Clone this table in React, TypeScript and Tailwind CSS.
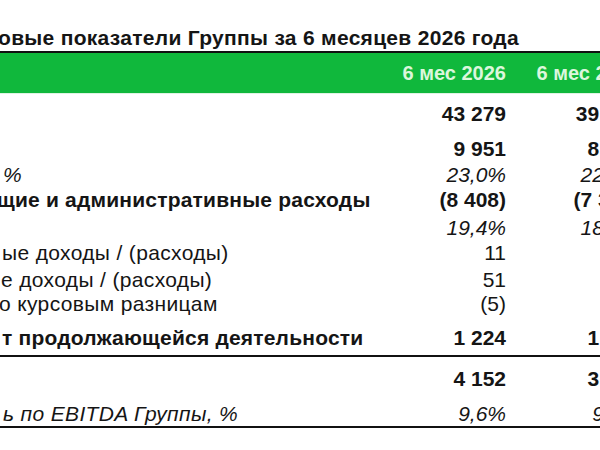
type Row = {
  label: string
  shift: number
  v1: string
  v2: string
  h: string
  style: "bold" | "italic" | "normal"
  tight?: boolean
}

const rows: Row[] = [
  { label: "", shift: 0, v1: "43 279", v2: "39 186", h: "h-[40px]", style: "bold" },
  { label: "", shift: 0, v1: "9 951", v2: "8 652", h: "h-[29px]", style: "bold" },
  { label: "%", shift: 3, v1: "23,0%", v2: "22,1%", h: "h-[21px]", style: "italic" },
  { label: "щие и административные расходы", shift: -3, v1: "(8 408)", v2: "(7 341)", h: "h-[32px]", style: "bold", tight: true },
  { label: "", shift: 0, v1: "19,4%", v2: "18,8%", h: "h-[22px]", style: "italic" },
  { label: "ые доходы / (расходы)", shift: 2, v1: "11", v2: "17", h: "h-[30px]", style: "normal" },
  { label: "е доходы / (расходы)", shift: 1, v1: "51", v2: "23", h: "h-[20px]", style: "normal" },
  { label: "о курсовым разницам", shift: -1, v1: "(5)", v2: "(8)", h: "h-[32px]", style: "normal" },
  { label: "т продолжающейся деятельности", shift: 2, v1: "1 224", v2: "1 047", h: "h-[35px]", style: "bold", tight: true },
]

const ebitda: Row[] = [
  { label: "", shift: 0, v1: "4 152", v2: "3 718", h: "h-[44px]", style: "bold" },
  { label: "ь по EBITDA Группы, %", shift: 3, v1: "9,6%", v2: "9,2%", h: "h-[25px]", style: "italic" },
]

const weight = {
  bold: "font-bold",
  italic: "italic",
  normal: "font-normal",
}

function TableRow({ row }: { row: Row }) {
  return (
    <div className={`grid grid-cols-[372px_134px_134px] items-center ${row.h} ${weight[row.style]}`}>
      <div className={`overflow-hidden whitespace-nowrap ${row.tight ? "tracking-[0.2px]" : "tracking-[0.35px]"}`}>
        <span className="block" style={{ marginLeft: row.shift }}>
          {row.label}
        </span>
      </div>
      <div className="text-right">{row.v1}</div>
      <div className="text-right">{row.v2}</div>
    </div>
  )
}

export default function App() {
  return (
    <div
      className="w-[600px] h-[450px] overflow-hidden bg-white text-[#151515] text-[21px] leading-[24px]"
      style={{ fontFamily: '"Liberation Sans", Arial, sans-serif' }}
    >
      <div className="w-[640px]">
        {/* title */}
        <div className="h-[51px] flex items-end pb-[1px] font-bold whitespace-nowrap tracking-[0.3px]">
          <span className="-ml-[2px]">овые показатели Группы за 6 месяцев 2026 года</span>
        </div>
        <div className="h-[2px] bg-[#111]" />

        {/* green header */}
        <div className="h-[40px] bg-[#10b83c] grid grid-cols-[372px_134px_134px] items-center font-bold text-[20px] text-[#dcf7dc]">
          <div />
          <div className="text-right">6 мес 2026</div>
          <div className="text-right">6 мес 2025</div>
        </div>
        <div className="h-[1px] bg-[#dff3e3]" />

        {rows.map((r, i) => (
          <TableRow key={i} row={r} />
        ))}
        <div className="h-[2px] bg-[#111]" />

        {ebitda.map((r, i) => (
          <TableRow key={i} row={r} />
        ))}
        <div className="h-[2px] bg-[#111]" />
      </div>
    </div>
  )
}
